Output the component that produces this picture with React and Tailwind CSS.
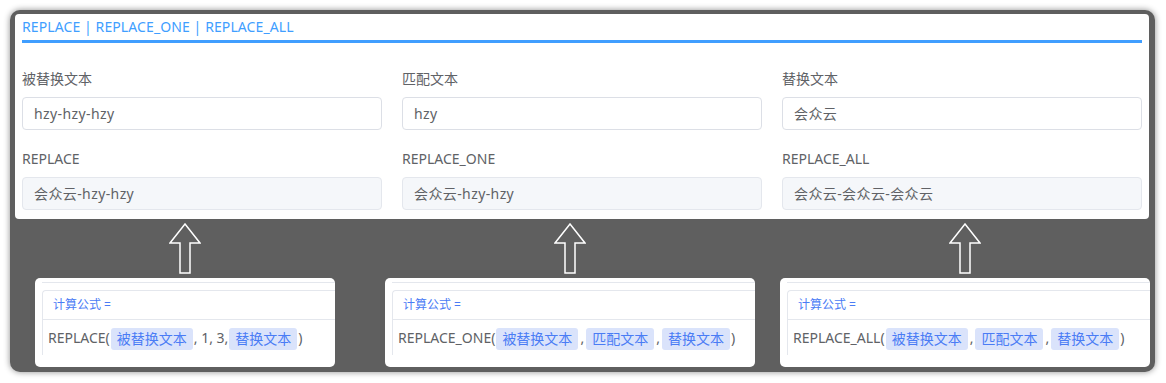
import React from 'react';

const font = { fontFamily: '"Noto Sans", "Noto Sans CJK SC", sans-serif' };

const fields = [
    { label: '被替换文本', value: 'hzy-hzy-hzy' },
    { label: '匹配文本', value: 'hzy' },
    { label: '替换文本', value: '会众云' },
];

const results = [
    { label: 'REPLACE', value: '会众云-hzy-hzy' },
    { label: 'REPLACE_ONE', value: '会众云-hzy-hzy' },
    { label: 'REPLACE_ALL', value: '会众云-会众云-会众云' },
];

const Arrow = () => (
    <svg width="32" height="51" viewBox="0 0 32 51" className="shrink-0">
        <polygon
            points="16,1 31,20 21,20 21,50 11,50 11,20 1,20"
            fill="none"
            stroke="#ffffff"
            strokeWidth="1.5"
            strokeLinejoin="miter"
        />
    </svg>
);

const Tag = ({ children }) => (
    <span className="mx-[1px] inline-block h-[22px] rounded-[3px] bg-[#dae3fb] px-[6px] align-middle leading-[22px] text-[#4a7cf5]">{children}</span>
);

const Comma = () => <span className="mx-[1px]">,</span>;

const FormulaCard = ({ width, children }) => (
    <div className={`${width} h-[89px] overflow-hidden rounded-[5px] bg-white pl-[7px] pt-[4px]`}>
        <div className="h-px w-[500px] bg-[#e4e7ed]" />
        <div className="mt-[7px] w-[500px] rounded-tl-[4px] border-l border-t border-[#e4e7ed]">
            <div className="flex h-[29px] items-center border-b border-[#e4e7ed] pl-[10px] text-[12px] text-[#4a7cf5]">
                计算公式 =
            </div>
            <div className="h-[35px] whitespace-nowrap pl-[5px] text-[14px] leading-[35px] text-[#606266]">{children}</div>
        </div>
    </div>
);

const Field = ({ label, value, disabled }) => (
    <div>
        <div className="h-[20px] text-[14px] leading-[20px] text-[#606266]">{label}</div>
        <div
            className={`mt-[8px] flex h-[33px] items-center rounded-[4px] border px-[11px] text-[14px] tracking-[0.4px] text-[#606266] ${disabled ? 'border-[#e4e7ed] bg-[#f5f7fa]' : 'border-[#dcdfe6] bg-white'}`}
        >
            {value}
        </div>
    </div>
);

const App = () => {
    return (
        <div className="h-[383px] w-[1166px] bg-white pl-[10px] pt-[10px]" style={font}>
            <div className="h-[362px] w-[1145px] rounded-[10px] bg-[#5f5f5f] pl-[5px] pt-[4px] shadow-[0_0_6px_rgba(0,0,0,0.45)]">
                <div className="h-[205px] w-[1134px] rounded-[4px] bg-white px-[7px] pt-[3px]">
                    <div className="h-[20px] text-[14px] leading-[20px] tracking-[0.1px] text-[#409eff]">
                        REPLACE | REPLACE_ONE | REPLACE_ALL
                    </div>
                    <div className="mt-[3px] h-[3px] bg-[#409eff]" />
                    <div className="mt-[26px] grid grid-cols-3 gap-x-[20px] gap-y-[19px]">
                        {fields.map(f => (
                            <Field key={f.label} label={f.label} value={f.value} />
                        ))}
                        {results.map(r => (
                            <Field key={r.label} label={r.label} value={r.value} disabled />
                        ))}
                    </div>
                </div>

                <div className="flex">
                    <div className="ml-[20px] flex flex-col items-center">
                        <div className="mt-[4px] mb-[4px]"><Arrow /></div>
                        <FormulaCard width="w-[300px]">
                            REPLACE(<Tag>被替换文本</Tag>, 1, 3,<Tag>替换文本</Tag>)
                        </FormulaCard>
                    </div>
                    <div className="ml-[50px] flex flex-col items-center">
                        <div className="mt-[4px] mb-[4px]"><Arrow /></div>
                        <FormulaCard width="w-[370px]">
                            REPLACE_ONE(<Tag>被替换文本</Tag><Comma /><Tag>匹配文本</Tag><Comma /><Tag>替换文本</Tag>)
                        </FormulaCard>
                    </div>
                    <div className="ml-[25px] flex flex-col items-center">
                        <div className="mt-[4px] mb-[4px]"><Arrow /></div>
                        <FormulaCard width="w-[370px]">
                            REPLACE_ALL(<Tag>被替换文本</Tag><Comma /><Tag>匹配文本</Tag><Comma /><Tag>替换文本</Tag>)
                        </FormulaCard>
                    </div>
                </div>
            </div>
        </div>
    );
};

export default App;
